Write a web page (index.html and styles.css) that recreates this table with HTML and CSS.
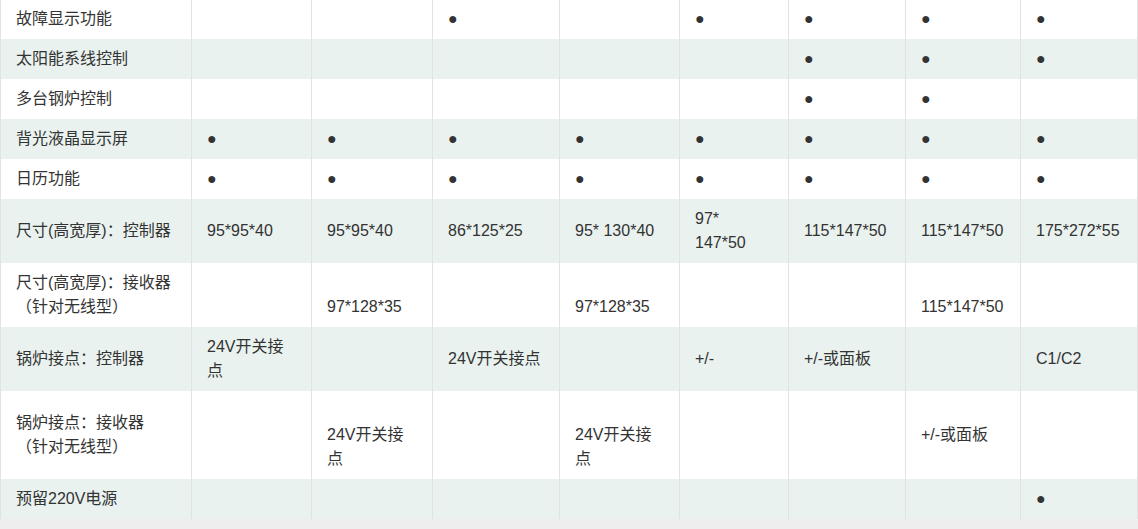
FILE: index.html
```html
<!DOCTYPE html>
<html lang="zh-CN">
<head>
<meta charset="utf-8">
<title>功能对比表</title>
<link rel="stylesheet" href="styles.css">
</head>
<body>
<table class="spec">
  <colgroup>
    <col class="c0"><col class="c1"><col class="c2"><col class="c3"><col class="c4"><col class="c5"><col class="c6"><col class="c7"><col class="c8">
  </colgroup>
  <tbody>
    <tr>
      <td>故障显示功能</td><td></td><td></td><td>●</td><td></td><td>●</td><td>●</td><td>●</td><td>●</td>
    </tr>
    <tr class="alt">
      <td>太阳能系线控制</td><td></td><td></td><td></td><td></td><td></td><td>●</td><td>●</td><td>●</td>
    </tr>
    <tr>
      <td>多台钢炉控制</td><td></td><td></td><td></td><td></td><td></td><td>●</td><td>●</td><td></td>
    </tr>
    <tr class="alt">
      <td>背光液晶显示屏</td><td>●</td><td>●</td><td>●</td><td>●</td><td>●</td><td>●</td><td>●</td><td>●</td>
    </tr>
    <tr>
      <td>日历功能</td><td>●</td><td>●</td><td>●</td><td>●</td><td>●</td><td>●</td><td>●</td><td>●</td>
    </tr>
    <tr class="alt">
      <td>尺寸(高宽厚)<span class="punc">：</span>控制器</td><td>95*95*40</td><td>95*95*40</td><td>86*125*25</td><td>95* 130*40</td><td>97* 147*50</td><td>115*147*50</td><td>115*147*50</td><td>175*272*55</td>
    </tr>
    <tr>
      <td>尺寸(高宽厚)<span class="punc">：</span>接收器<br><span class="punc">（</span>针对无线型<span class="punc">）</span></td><td></td><td><br>97*128*35</td><td></td><td><br>97*128*35</td><td></td><td></td><td><br>115*147*50</td><td></td>
    </tr>
    <tr class="alt">
      <td>锅炉接点<span class="punc">：</span>控制器</td><td>24V开关接点</td><td></td><td>24V开关接点</td><td></td><td>+/-</td><td>+/-或面板</td><td></td><td>C1/C2</td>
    </tr>
    <tr>
      <td>锅炉接点<span class="punc">：</span>接收器<br><span class="punc">（</span>针对无线型<span class="punc">）</span></td><td></td><td><br>24V开关接点</td><td></td><td><br>24V开关接点</td><td></td><td></td><td>+/-或面板</td><td></td>
    </tr>
    <tr class="alt">
      <td>预留220V电源</td><td></td><td></td><td></td><td></td><td></td><td></td><td></td><td>●</td>
    </tr>
  </tbody>
</table>
</body>
</html>
```
FILE: styles.css
```css
html, body {
  margin: 0;
  padding: 0;
  background: #eeeeee;
}

body {
  font-family: "Liberation Sans", "Noto Sans CJK SC", sans-serif;
  font-size: 16px;
  color: #333333;
}

.spec {
  margin-top: -1px;
  width: 1138px;
  table-layout: fixed;
  border-collapse: separate;
  border-spacing: 0;
}

.c0 { width: 191px; }
.c1 { width: 120px; }
.c2 { width: 121px; }
.c3 { width: 127px; }
.c4 { width: 120px; }
.c5 { width: 109px; }
.c6 { width: 117px; }
.c7 { width: 115px; }
.c8 { width: 118px; }

.spec td {
  box-sizing: border-box;
  background: #ffffff;
  border-left: 1px solid #e2e2e2;
  padding: 8px 17px 8px 15px;
  line-height: 24px;
  vertical-align: middle;
  text-align: left;
}

.spec td:last-child {
  border-right: 1px solid #e2e2e2;
}

.spec tr.alt td {
  background: #e9f2ef;
}

.punc {
  font-family: "Noto Sans CJK TC", "Noto Sans CJK SC", sans-serif;
  line-height: 16px;
}
```
